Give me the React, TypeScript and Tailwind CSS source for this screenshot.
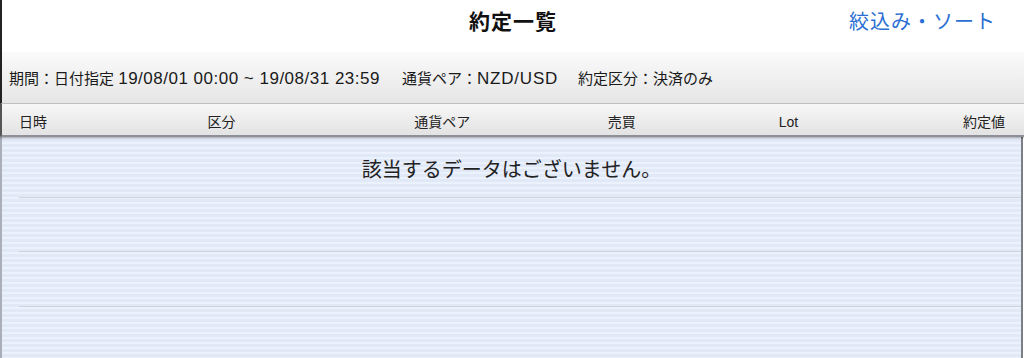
import React from 'react';

const font = { fontFamily: '"Liberation Sans", "Noto Sans CJK JP", sans-serif' };

const columns = [
  { label: '日時', cls: 'w-[130px] text-left pl-[17px]' },
  { label: '区分', cls: 'w-[180px] text-center' },
  { label: '通貨ペア', cls: 'w-[262px] text-center' },
  { label: '売買', cls: 'w-[98px] text-center' },
  { label: 'Lot', cls: 'w-[236px] text-center' },
  { label: '約定値', cls: 'w-[118px] text-right pr-[19px]' },
];

function App() {
  return (
    <div className="w-[1024px] h-[358px] flex flex-col overflow-hidden bg-white text-[#111]" style={font}>
      {/* header */}
      <div className="h-[52px] shrink-0 flex items-center relative border-l-2 border-[#222] bg-white">
        <div className="flex-1 text-center text-[21px] font-bold tracking-[1px] pb-[8px]">約定一覧</div>
        <div className="absolute right-[28px] top-[7px] text-[20px] text-[#2b6fd3] tracking-[1px]">絞込み・ソート</div>
      </div>

      {/* filter bar */}
      <div className="h-[52px] shrink-0 flex items-center pl-[7px] pt-[3px] border-l-2 border-[#222] border-b border-b-[#c4c4c4] bg-gradient-to-b from-[#fafafa] to-[#e6e6e6] text-[15px] text-[#1a1a1a]">
        <span>期間：日付指定 <span className="text-[17px] tracking-[0.5px]">19/08/01 00:00 ~ 19/08/31 23:59</span></span>
        <span className="ml-[22px]">通貨ペア：<span className="text-[17px] tracking-[0.8px]">NZD/USD</span></span>
        <span className="ml-[20px]">約定区分：決済のみ</span>
      </div>

      {/* column header */}
      <div className="h-[33px] shrink-0 flex items-end pb-[2px] border-l-2 border-[#555] border-b-2 border-b-[#8d9096] bg-gradient-to-b from-[#f7f7f7] to-[#e3e3e3] text-[14px] text-[#222] shadow-[0_1px_2px_rgba(0,0,0,0.35)] relative z-10">
        {columns.map((c) => (
          <div key={c.label} className={c.cls}>{c.label}</div>
        ))}
      </div>

      {/* body */}
      <div className="flex-1 flex flex-col border-l-2 border-[#a9aeb8] border-r-2 border-r-[#7c7f86] mr-[1px] bg-[repeating-linear-gradient(180deg,#ebf1fd_0px,#ebf1fd_2.5px,#e1e8f6_2.5px,#e1e8f6_5px)]">
        <div className="h-[60px] flex items-center justify-center text-[20px] text-[#222] pt-[6px]">該当するデータはございません。</div>
        <div className="h-[54px] ml-[17px] border-t border-[#cfd3dc]" />
        <div className="h-[55px] ml-[17px] border-t border-[#cfd3dc]" />
        <div className="flex-1 ml-[17px] border-t border-[#cfd3dc]" />
      </div>
    </div>
  );
}

export default App;
